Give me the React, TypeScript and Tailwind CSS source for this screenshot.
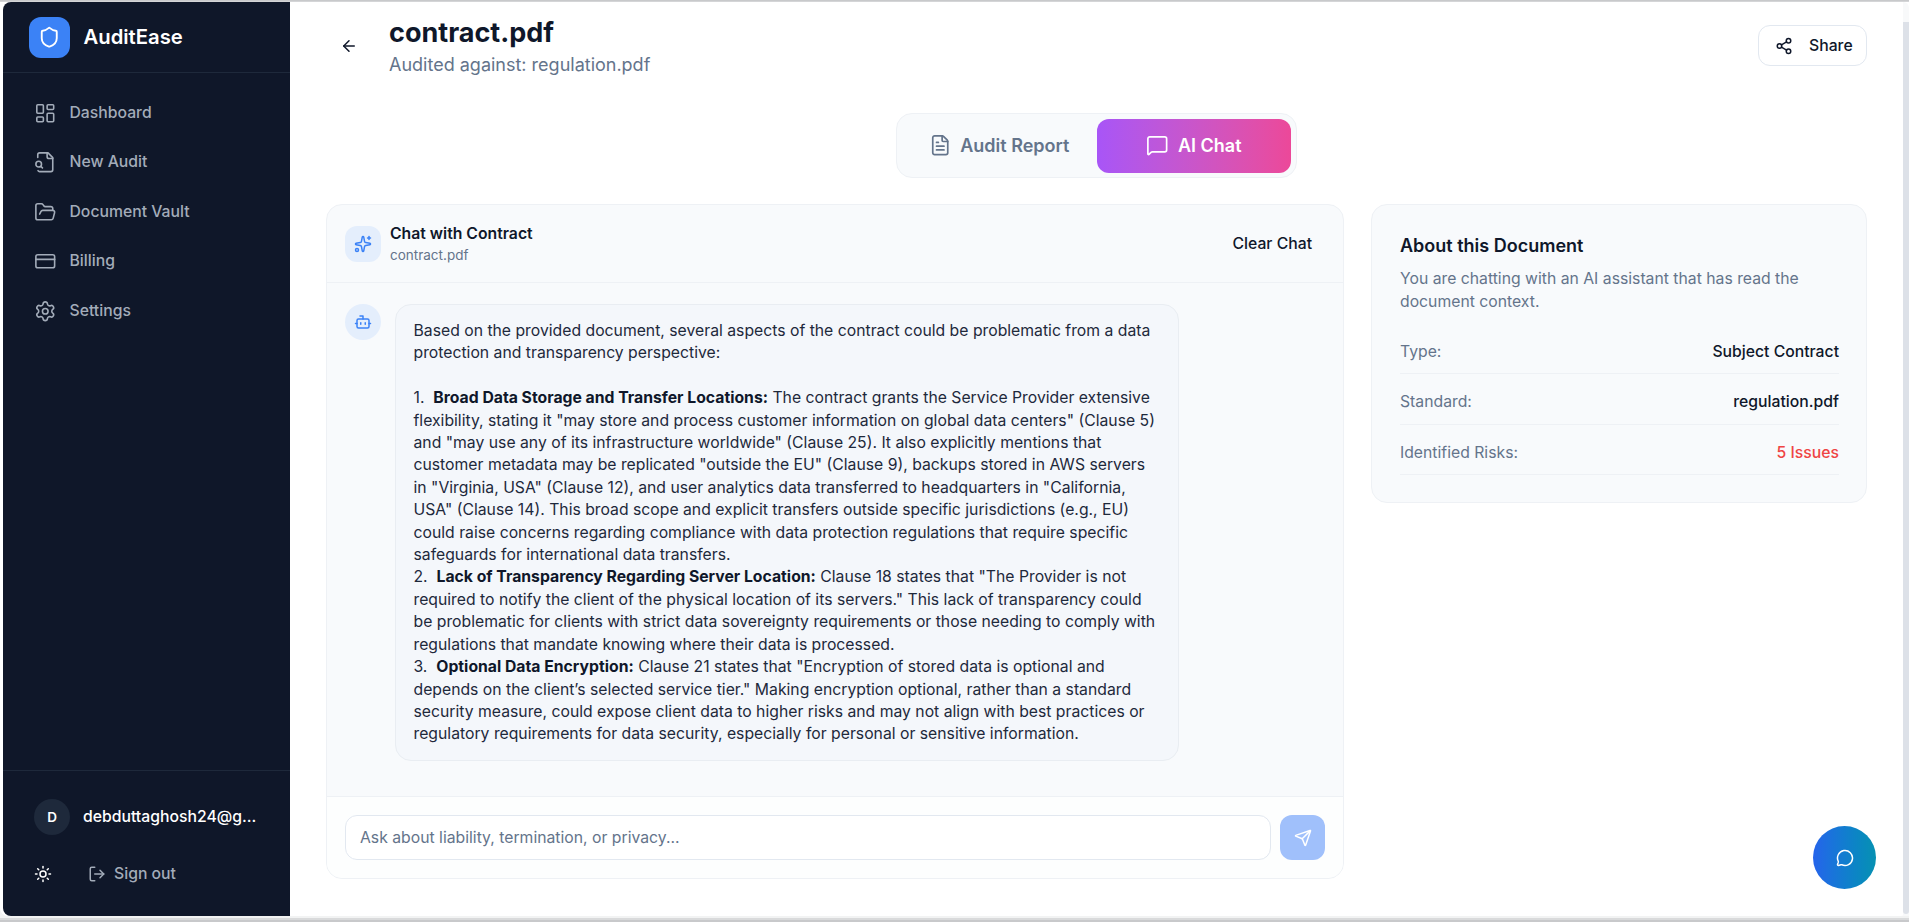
import React from "react";
import { LayoutDashboard, FolderOpen, CreditCard, Settings, Shield, Sun, LogOut, ArrowLeft, Share2, FileText, MessageSquare, Sparkles, Bot, Send, MessageCircle } from "lucide-react";

function FileSearchOld({ size, strokeWidth }: { size: number; strokeWidth: number }) {
  return (
    <svg width={size} height={size} viewBox="0 0 24 24" fill="none" stroke="currentColor" strokeWidth={strokeWidth} strokeLinecap="round" strokeLinejoin="round">
      <path d="M14 2v4a2 2 0 0 0 2 2h4" />
      <path d="M4.268 21a2 2 0 0 0 1.727 1H18a2 2 0 0 0 2-2V7l-5-5H6a2 2 0 0 0-2 2v3" />
      <path d="m9 18-1.5-1.5" />
      <circle cx="5" cy="14" r="3" />
    </svg>
  );
}

const nav = [
  { label: "Dashboard", Icon: LayoutDashboard },
  { label: "New Audit", Icon: FileSearchOld },
  { label: "Document Vault", Icon: FolderOpen },
  { label: "Billing", Icon: CreditCard },
  { label: "Settings", Icon: Settings },
];

function Row({ k, v, c }: { k: string; v: string; c: string }) {
  return (
    <div className="flex justify-between items-center h-[50.5px] pt-[7px] border-b border-[#eef1f5] text-[15.75px]">
      <span className="text-[#64748b]">{k}</span>
      <span className={c}>{v}</span>
    </div>
  );
}

export default function App() {
  return (
    <div className="h-[922px] w-[1909px] overflow-hidden bg-[#c8c9cb] pt-[1px] font-['Inter',sans-serif]">
      <div className="h-[919px] bg-[#f2f3f3] border-t border-[#d4d5d7] border-b-2 border-b-[#d9dadb]">
        <div className="h-[914px] flex bg-white pl-[3px] rounded-b-lg">
          <aside className="w-[287px] shrink-0 bg-[#0f1729] rounded-l-lg flex flex-col">
            <div className="h-[71px] shrink-0 flex items-center gap-[13.5px] pl-[26px] border-b border-[#1e293b]">
              <div className="w-[41px] h-[41px] rounded-xl bg-[#3b82f6] flex items-center justify-center">
                <Shield size={22.5} color="white" strokeWidth={2} />
              </div>
              <span className="text-[20.25px] font-semibold text-white">AuditEase</span>
            </div>
            <nav className="flex flex-col pt-[15px] pl-[30.5px]">
              {nav.map(({ label, Icon }) => (
                <div key={label} className="h-[49.5px] flex items-center gap-[13.5px] text-[15.75px] font-medium text-[#a3acb9]">
                  <Icon size={22.5} strokeWidth={1.7} />
                  <span>{label}</span>
                </div>
              ))}
            </nav>
            <div className="mt-auto border-t border-[#1e293b] h-[146px] pl-[31px] pt-[28px]">
              <div className="flex items-center gap-[13px]">
                <div className="w-9 h-9 rounded-full bg-[#1e293b] flex items-center justify-center text-white text-[13.5px] font-semibold">D</div>
                <span className="text-[15.75px] font-medium text-white">debduttaghosh24@g...</span>
              </div>
              <div className="flex items-center mt-[27px] text-[15.75px] text-[#a3acb9] font-medium">
                <Sun size={18} color="white" className="mr-[36px]" />
                <LogOut size={18} className="mr-[8px]" />
                <span>Sign out</span>
              </div>
            </div>
          </aside>
          <main className="flex-1 min-w-0 flex flex-col pl-[36px] pr-[36px]">
            <header className="h-[111px] shrink-0 flex items-start">
              <ArrowLeft size={18} className="mt-[35px] ml-[14px] mr-[31px] text-[#0f172a]" />
              <div className="pt-[13px]">
                <h1 className="text-[27px] leading-[36px] font-bold text-[#0f172a]">contract.pdf</h1>
                <p className="text-[18px] leading-[27px] text-[#64748b]">Audited against: regulation.pdf</p>
              </div>
              <button className="ml-auto mt-[23px] w-[109px] h-[41px] rounded-xl border border-[#e2e8f0] flex items-center pl-[16px] gap-[16px] text-[15.75px] font-medium text-[#0f172a]">
                <Share2 size={18} />
                <span>Share</span>
              </button>
            </header>
            <div className="flex justify-center pr-[0px]">
              <div className="w-[401px] h-[65px] rounded-2xl border border-[#eef1f5] bg-[#f8fafc] flex items-center pl-[1px]">
                <div className="w-[199px] pl-[3px] flex items-center justify-center gap-[9px] text-[18px] font-semibold text-[#64748b]">
                  <FileText size={22.5} strokeWidth={1.8} />
                  <span>Audit Report</span>
                </div>
                <div className="w-[194px] h-[54px] rounded-xl bg-gradient-to-r from-[#a855f7] to-[#ec4899] flex items-center justify-center gap-[9px] text-[18px] font-semibold text-white">
                  <MessageSquare size={22.5} strokeWidth={1.8} />
                  <span>AI Chat</span>
                </div>
              </div>
            </div>
            <div className="flex gap-[27px] mt-[26px] items-start">
              <section className="w-[1018px] h-[675px] shrink-0 rounded-2xl border border-[#eef1f5] bg-[#f8fafc] flex flex-col overflow-hidden">
                <div className="h-[78px] shrink-0 flex items-center pl-[18px] pr-[31px] border-b border-[#eef1f5]">
                  <div className="w-9 h-9 rounded-xl bg-[#e4eefc] flex items-center justify-center mr-[9px]">
                    <Sparkles size={18} className="text-[#3b82f6]" />
                  </div>
                  <div>
                    <div className="text-[15.75px] leading-[22px] font-semibold text-[#0f172a]">Chat with Contract</div>
                    <div className="text-[13.5px] leading-[20px] text-[#64748b]">contract.pdf</div>
                  </div>
                  <button className="ml-auto text-[15.75px] font-medium text-[#0f172a]">Clear Chat</button>
                </div>
                <div className="flex-1 pl-[18px] pt-[21px] flex items-start gap-[13.5px]">
                  <div className="w-9 h-9 rounded-full bg-[#e4eefc] flex items-center justify-center shrink-0">
                    <Bot size={18} className="text-[#3b82f6]" />
                  </div>
                  <div className="w-[784px] h-[457px] rounded-2xl border border-[#e9edf2] bg-[#f4f7fb] px-[18px] pt-[15px] text-[15.75px] leading-[22.4px] text-[#1e293b]">
                    Based on the provided document, several aspects of the contract could be problematic from a data protection and transparency perspective:
                    <br /><br />
                    1.&nbsp; <b className="font-bold text-[#0f172a]">Broad Data Storage and Transfer Locations:</b> The contract grants the Service Provider extensive flexibility, stating it "may store and process customer information on global data centers" (Clause 5) and "may use any of its infrastructure worldwide" (Clause 25). It also explicitly mentions that customer metadata may be replicated "outside the EU" (Clause 9), backups stored in AWS servers in "Virginia, USA" (Clause 12), and user analytics data transferred to headquarters in "California, USA" (Clause 14). This broad scope and explicit transfers outside specific jurisdictions (e.g., EU) could raise concerns regarding compliance with data protection regulations that require specific safeguards for international data transfers.
                    <br />
                    2.&nbsp; <b className="font-bold text-[#0f172a]">Lack of Transparency Regarding Server Location:</b> Clause 18 states that "The Provider is not required to notify the client of the physical location of its servers." This lack of transparency could be problematic for clients with strict data sovereignty requirements or those needing to comply with regulations that mandate knowing where their data is processed.
                    <br />
                    3.&nbsp; <b className="font-bold text-[#0f172a]">Optional Data Encryption:</b> Clause 21 states that "Encryption of stored data is optional and depends on the client’s selected service tier." Making encryption optional, rather than a standard security measure, could expose client data to higher risks and may not align with best practices or regulatory requirements for data security, especially for personal or sensitive information.
                  </div>
                </div>
                <div className="h-[82px] shrink-0 border-t border-[#eef1f5] bg-[#fdfefe] flex items-center pl-[18px] pr-[18px] gap-[9px]">
                  <div className="flex-1 h-[45px] rounded-xl border border-[#e2e8f0] bg-white flex items-center pl-[14px] text-[15.75px] text-[#64748b]">Ask about liability, termination, or privacy...</div>
                  <div className="w-[45px] h-[45px] rounded-xl bg-[#a0c0fb] flex items-center justify-center">
                    <Send size={18} color="white" />
                  </div>
                </div>
              </section>
              <section className="flex-1 h-[299px] rounded-2xl border border-[#eef1f5] bg-[#f8fafc] pl-[28px] pr-[27px] pt-[27px]">
                <h2 className="text-[18px] leading-[28px] font-semibold text-[#0f172a]">About this Document</h2>
                <p className="mt-[8px] text-[15.75px] leading-[22.75px] text-[#64748b]">You are chatting with an AI assistant that has read the document context.</p>
                <div className="mt-[10px]">
                  <Row k="Type:" v="Subject Contract" c="text-[#0f172a] font-medium" />
                  <Row k="Standard:" v="regulation.pdf" c="text-[#0f172a] font-medium" />
                  <Row k="Identified Risks:" v="5 Issues" c="text-[#ef4444] font-medium" />
                </div>
              </section>
            </div>
          </main>
          <div className="w-[6px] shrink-0 bg-[#f8f9fa] rounded-tr-lg pt-[20px]">
            <div className="h-[892px] bg-[#dde1e8] rounded-b-sm" />
          </div>
        </div>
      </div>
      <button className="fixed left-[1813px] top-[826px] w-[63px] h-[63px] rounded-full bg-gradient-to-r from-[#2563eb] to-[#0891b2] flex items-center justify-center">
        <MessageCircle size={18} color="white" />
      </button>
    </div>
  );
}
